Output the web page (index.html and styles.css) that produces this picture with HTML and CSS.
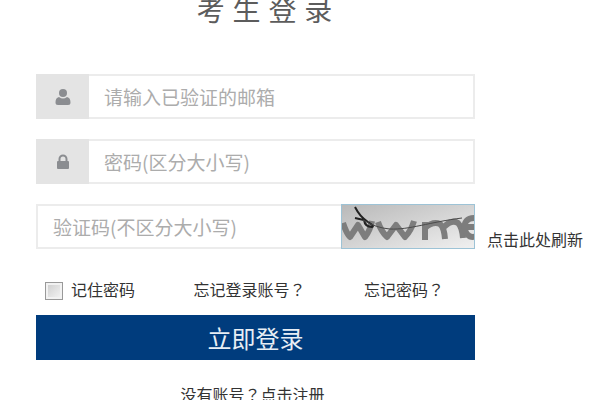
FILE: index.html
```html
<!DOCTYPE html>
<html lang="zh-CN">

<head>
    <meta charset="UTF-8">
    <meta name="viewport" content="width=device-width, initial-scale=1.0">
    <title>考生登录</title>
    <link rel="stylesheet" href="styles.css">
</head>

<body>
    <form class="login" method="POST" action="/login">
        <h1>考 生 登 录</h1>

        <div class="field">
            <label class="field-icon" for="email" aria-label="邮箱">
                <svg width="16" height="18" viewBox="0 0 16 18">
                    <circle cx="8" cy="5" r="4" />
                    <path d="M4 9C1.500 9.500 .5 11.500 .5 14.500Q.5 17 3 17H13Q15.500 17 15.500 14.500C15.500 11.500 14.500 9.500 12 9Q8 12 4 9Z" />
                </svg>
            </label>
            <input type="text" id="email" name="email" placeholder="请输入已验证的邮箱">
        </div>

        <div class="field">
            <label class="field-icon" for="password" aria-label="密码">
                <svg width="14" height="16" viewBox="0 0 14 16">
                    <path class="shackle" d="M3.500 8V5a3.500 3.500 0 0 1 7 0V8" />
                    <rect x="1" y="7" width="12" height="8" rx="1" />
                </svg>
            </label>
            <input type="password" id="password" name="password" placeholder="密码(区分大小写)">
        </div>

        <div class="field">
            <input type="text" name="captcha" aria-label="验证码" placeholder="验证码(不区分大小写)">
            <svg class="captcha" viewBox="0 0 132 43" preserveAspectRatio="none">
                <defs>
                    <linearGradient id="shade" x1="0" y1="0" x2="1" y2="1">
                        <stop offset="0" stop-color="#b9b9b9" />
                        <stop offset=".5" stop-color="#d4d4d4" />
                        <stop offset="1" stop-color="#f0f0f0" />
                    </linearGradient>
                </defs>
                <rect width="132" height="43" fill="url(#shade)" />
                <g class="captcha-strokes">
                    <path d="M1 18C3 24 5 29 8 32L16 20L23 32Q28 26 30 16" />
                    <path d="M36 17Q39 26 45 32L54 20L63 32Q69 26 72 16" />
                    <path d="M83 35V17M83 23Q91 16 98 19Q102 22 103 34M102 22Q110 14 116 18Q120 22 121 33" />
                    <path d="M134 13C125 12 121 18 123 25C125 32 130 33 135 31M124 22H134" />
                </g>
                <path class="scribble" d="M13 2Q18 12 26 17Q33 21 30 22Q23 22 22 15Q17 14 13 13" />
                <path class="scribble-tail" d="M21 15Q34 23 48 24C67 25 88 17 120 13" />
            </svg>
        </div>
        <a class="refresh" href="#">点击此处刷新</a>

        <div class="options">
            <label class="remember"><input type="checkbox" name="remember">记住密码</label>
            <a href="#">忘记登录账号<span class="mark" lang="zh-TW">？</span></a>
            <a href="#">忘记密码<span class="mark" lang="zh-TW">？</span></a>
        </div>

        <button type="submit">立即登录</button>

        <p class="register">没有账号<span class="mark" lang="zh-TW">？</span><a href="#">点击注册</a></p>
    </form>
</body>

</html>
```

FILE: styles.css
```css
* {
    box-sizing: border-box;
}

body {
    margin: 0;
    background: #fff;
    color: #333;
    font-family: "Noto Sans CJK SC", sans-serif;
    font-size: 16px;
    line-height: 20px;
    overflow: hidden;
}

a {
    color: inherit;
    text-decoration: none;
}

/* form on the left, refresh link in the narrow column */
.login {
    display: grid;
    grid-template-columns: minmax(0, 1fr) 100px;
    column-gap: 12px;
    row-gap: 20px;
    padding: 0 13px 0 36px;
}

.login > * {
    grid-column: 1;
}

h1 {
    margin: 0 0 30px;
    padding-left: 18px;
    color: #5c5c5c;
    font-family: "Liberation Sans", "Noto Sans CJK SC", sans-serif;
    font-size: 28px;
    font-weight: 400;
    line-height: 24px;
    text-align: center;
}

.field {
    display: flex;
    height: 45px;
    border: 2px solid #ececec;
}

.field-icon {
    display: flex;
    flex: 0 0 53px;
    align-items: center;
    justify-content: center;
    margin: -2px 0 -2px -2px;
    background: #e4e4e4;
    fill: #8b8d91;
}

.shackle {
    fill: none;
    stroke: #8b8d91;
    stroke-width: 2;
}

.field input {
    flex: 1;
    min-width: 0;
    padding: 0 15px;
    border: 0;
    outline: none;
    background: transparent;
    color: #333;
    font-family: inherit;
    font-size: 19px;
}

.field input::placeholder {
    color: #acacac;
}

.captcha {
    flex: 0 0 134px;
    height: 45px;
    margin: -2px;
    border: 1px solid #9dc3d6;
}

.captcha-strokes {
    fill: none;
    stroke: #7d7d7d;
    stroke-width: 6;
    stroke-linejoin: round;
}

.scribble {
    fill: none;
    stroke: #222;
    stroke-width: 2;
}

.scribble-tail {
    fill: none;
    stroke: #4a4a4a;
    stroke-width: 1;
}

.login .refresh {
    grid-column: 2;
    grid-row: 4;
    align-self: end;
}

.options {
    display: flex;
    justify-content: space-between;
    align-items: center;
    margin-top: 9px;
    padding: 0 31px 0 9px;
}

.remember {
    display: flex;
    align-items: center;
    gap: 8px;
}

.remember input {
    appearance: none;
    width: 18px;
    height: 18px;
    margin: 4px 0 0;
    border: 1px solid #999;
    background: linear-gradient(135deg, #ccc, #f6f6f6);
    box-shadow: inset 0 0 0 2px #f2f2f2;
}

.remember input:checked {
    background: #003c7d;
}

/* centred form of the full-width question mark */
.mark {
    font-family: "Noto Sans CJK TC", sans-serif;
}

button {
    height: 45px;
    margin-top: -5px;
    padding: 0;
    border: 0;
    background: #003c7d;
    color: #e8eef5;
    font-family: inherit;
    font-size: 24px;
    cursor: pointer;
}

.register {
    margin: 4px 0 0;
    padding-right: 6px;
    text-align: center;
}
```
